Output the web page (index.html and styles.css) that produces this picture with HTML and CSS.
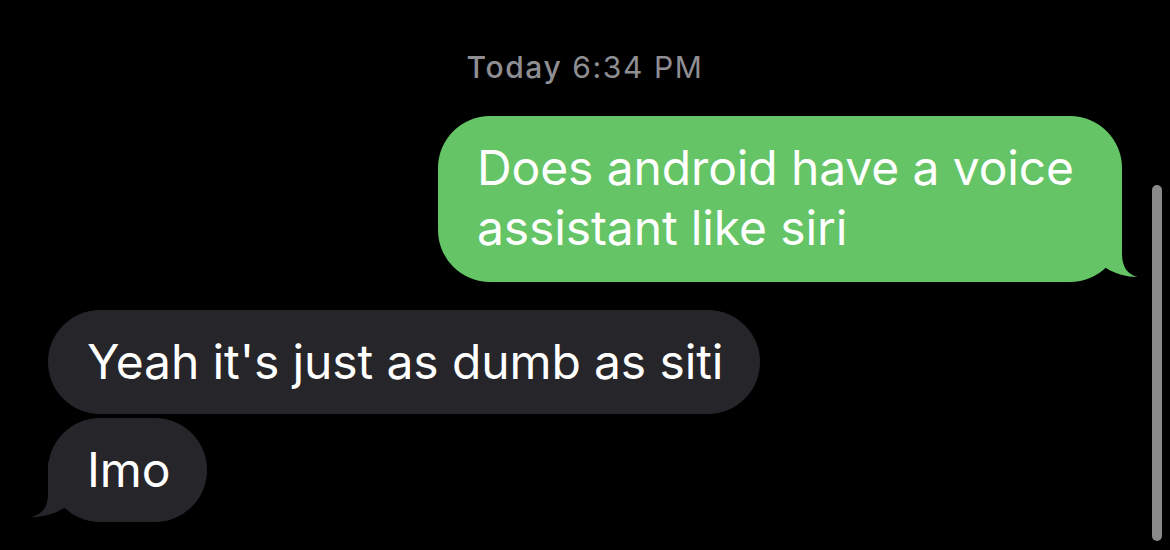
FILE: index.html
```html
<!DOCTYPE html>
<html>
<head>
<meta charset="utf-8">
<link rel="stylesheet" href="styles.css">
</head>
<body>
<div class="thread">
  <div class="stamp"><span class="day">Today</span> 6:34 PM</div>
  <div class="row sent">
    <div class="bubble green">Does android have a voice assistant like siri
      <svg class="tail tail-right" width="60" height="60" viewBox="-40 -55 60 60"><path d="M -30 -55 L 0 -55 L 0 -24 C 0 -10 5 -3 15.5 0 C 5 0 -8 -3 -21 -12 L -30 -12 Z" fill="#65c466"/></svg>
    </div>
  </div>
  <div class="row recv">
    <div class="bubble gray">Yeah it's just as dumb as siti</div>
  </div>
  <div class="row recv tight">
    <div class="bubble gray">Imo
      <svg class="tail tail-left" width="60" height="60" viewBox="-20 -55 60 60"><path d="M 30 -55 L 0 -55 L 0 -24 C 0 -10 -5 -3 -16.5 0 C -5 0 8 -3 19 -11 L 30 -11 Z" fill="#262529"/></svg>
    </div>
  </div>
</div>
<div class="scrollbar"></div>
</body>
</html>
```

FILE: styles.css
```css
html, body {
  margin: 0;
  padding: 0;
  background: #000;
}
body {
  width: 1170px;
  height: 550px;
  overflow: hidden;
  position: relative;
  font-family: Inter, "Noto Sans", sans-serif;
  -webkit-font-smoothing: antialiased;
}
.thread {
  display: flex;
  flex-direction: column;
  padding-top: 49px;
}
.stamp {
  text-align: center;
  color: #8e8e93;
  font-size: 30px;
  line-height: 36px;
  letter-spacing: 1.6px;
}
.stamp .day {
  font-weight: 500;
}
.row {
  display: flex;
  padding: 0 48px;
}
.row.sent {
  justify-content: flex-end;
  margin-top: 31px;
}
.row.recv {
  justify-content: flex-start;
  margin-top: 28px;
}
.row.recv.tight {
  margin-top: 4px;
}
.bubble {
  position: relative;
  color: #fff;
  font-size: 48px;
  line-height: 60px;
  letter-spacing: -0.12px;
  padding: 22px 37px 22px 39px;
  border-radius: 52px;
}
.bubble.green {
  background: #65c466;
  width: 608px;
  padding-bottom: 24px;
}
.bubble.gray {
  background: #262529;
}
.tail {
  position: absolute;
  bottom: 0;
  overflow: visible;
}
.tail-right {
  right: -20px;
}
.tail-left {
  left: -20px;
}
.scrollbar {
  position: absolute;
  left: 1152px;
  top: 185px;
  width: 10px;
  height: 356px;
  border-radius: 5px;
  background: #8a8a8a;
}
```
